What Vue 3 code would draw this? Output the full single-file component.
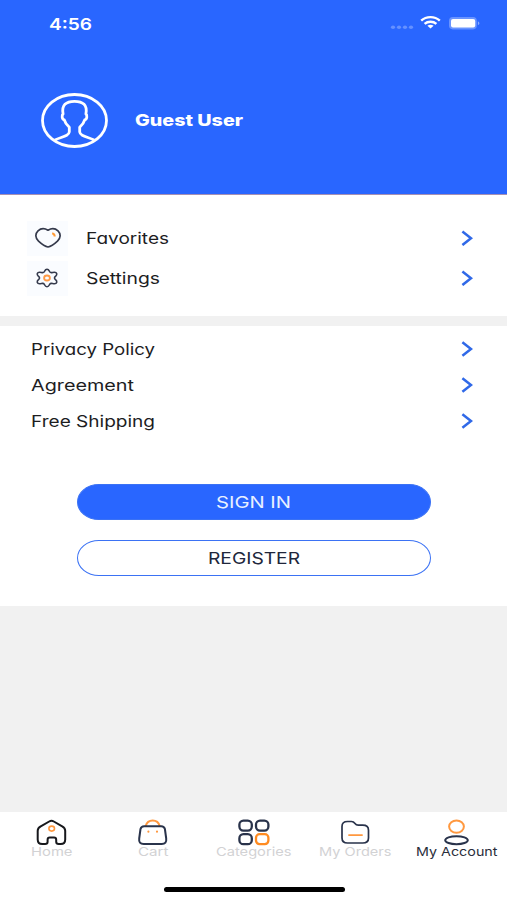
<script setup>
import { h } from 'vue'

// Label whose glyphs are widened to fill an exact width.
const WideText = (props) =>
  h('svg', { width: props.w, height: props.size * 1.25, overflow: 'visible', style: { display: 'block', flex: 'none' } }, [
    h('text', {
      x: 0, y: props.size, 'font-size': props.size, fill: 'currentColor',
      textLength: props.w, lengthAdjust: 'spacingAndGlyphs'
    }, props.text)
  ])
WideText.props = ['text', 'w', 'size']

const shortcuts = [
  { label: 'Favorites', w: 83, icon: 'heart' },
  { label: 'Settings', w: 74, icon: 'gear' }
]
const links = [
  { label: 'Privacy Policy', w: 124 },
  { label: 'Agreement', w: 103 },
  { label: 'Free Shipping', w: 124 }
]
const tabs = [
  { label: 'Home', w: 41.5, icon: 'home' },
  { label: 'Cart', w: 30.5, icon: 'cart' },
  { label: 'Categories', w: 75.5, icon: 'grid' },
  { label: 'My Orders', w: 72.5, icon: 'orders' },
  { label: 'My Account', w: 81.5, icon: 'account', active: true }
]
</script>

<template>
  <div class="page">
    <header class="hero">
      <div class="status">
        <WideText class="clock" text="4:56" :w="43" :size="16.2" />
        <svg class="indicators" width="92" height="16" viewBox="0 0 92 16">
          <g fill="#fff" opacity=".28">
            <ellipse cx="4" cy="12.2" rx="2.1" ry="1.7" /><ellipse cx="10" cy="12.2" rx="2.1" ry="1.7" />
            <ellipse cx="16" cy="12.2" rx="2.1" ry="1.7" /><ellipse cx="22" cy="12.2" rx="2.1" ry="1.7" />
          </g>
          <g fill="none" stroke="#fff" stroke-width="2.4">
            <path d="M32.2 5.7C37.3.9 45.7.9 50.8 5.7" />
            <path d="M35.6 8.9C38.9 6 44.1 6 47.4 8.9" />
          </g>
          <path d="M38.4 10.8Q41.5 8.8 44.6 10.8L41.5 13.6Z" fill="#fff" />
          <rect x="60" y="2" width="27.8" height="12.4" rx="3.8" fill="#fff" opacity=".3" />
          <rect x="62" y="4" width="24.2" height="8.4" rx="2" fill="#fff" />
          <path d="M88.9 6.2Q92 8.2 88.9 10.2Z" fill="#fff" opacity=".45" />
        </svg>
      </div>
      <div class="profile">
        <svg class="avatar" width="68" height="56" viewBox="0 0 68 56" fill="none" stroke="#fff" stroke-width="2.8" stroke-linejoin="round">
          <ellipse cx="33.5" cy="28.5" rx="32" ry="26" />
          <path d="M14 48C19.5 45 28 44.3 28.3 40V35.3C26 33.1 24 30.5 23.3 27.8C20.7 27.3 20.7 23 22.1 22C20.3 13 25 9.3 33.5 9.3S46.7 13 44.9 22C46.3 23 46.3 27.3 43.7 27.8C43 30.5 41 33.1 38.7 35.3V40C39 44.3 47.5 45 53 48" />
        </svg>
        <WideText text="Guest User" :w="108" :size="16" />
      </div>
    </header>

    <section class="shortcuts">
      <div v-for="s in shortcuts" :key="s.label" class="row">
        <span class="tile">
          <svg v-if="s.icon === 'heart'" width="28" height="22" viewBox="0 0 28 22" fill="none" stroke="#353a4c" stroke-width="1.7" stroke-linejoin="round">
            <path d="M14 3.2C10.5 1 6.7 1.3 4 3.8C.9 6.8 1.3 11.3 4.5 14.2C7.2 16.7 11.7 19.7 14 20C16.3 19.7 20.8 16.7 23.5 14.2C26.7 11.3 27.1 6.8 24 3.8C21.3 1.3 17.5 1 14 3.2Z" />
            <path d="M18.2 6.2Q20.7 7 20.7 9.4" stroke="#ff9a35" stroke-width="2" />
          </svg>
          <svg v-else class="gear" width="24" height="20" viewBox="0 0 24 20" fill="none" stroke="#353a4c" stroke-width="1.6" stroke-linejoin="round">
            <path d="M12 1.2C13.8 1.2 14.1 2.6 14.8 3.9C15.4 4.8 16.4 4.8 17.6 4.5C19.6 4 21.2 4.1 21.7 5.5C22.2 6.9 21.3 7.6 20.4 8.4C19.2 9.5 19.2 10.5 20.4 11.6C21.3 12.4 22.2 13.1 21.7 14.5C21.2 15.9 19.6 16 17.6 15.5C16.4 15.2 15.4 15.2 14.8 16.1C14.1 17.4 13.8 18.8 12 18.8C10.2 18.8 9.9 17.4 9.2 16.1C8.6 15.2 7.6 15.2 6.4 15.5C4.4 16 2.8 15.9 2.3 14.5C1.8 13.1 2.7 12.4 3.6 11.6C4.8 10.5 4.8 9.5 3.6 8.4C2.7 7.6 1.8 6.9 2.3 5.5C2.8 4.1 4.4 4 6.4 4.5C7.6 4.8 8.6 4.8 9.2 3.9C9.9 2.6 10.2 1.2 12 1.2Z" />
            <ellipse cx="12" cy="10" rx="2.9" ry="2.5" stroke="#ff9a45" stroke-width="1.8" />
          </svg>
        </span>
        <WideText :text="s.label" :w="s.w" :size="16" />
        <svg class="chevron" width="12" height="16" viewBox="0 0 12 16"><path d="M1.4 1.5L10 8.3L1.4 15.1" /></svg>
      </div>
    </section>

    <section class="more">
      <div v-for="l in links" :key="l.label" class="row link">
        <WideText :text="l.label" :w="l.w" :size="16" />
        <svg class="chevron" width="12" height="16" viewBox="0 0 12 16"><path d="M1.4 1.2L10 8L1.4 14.8" /></svg>
      </div>
      <div class="actions">
        <button class="btn primary"><WideText text="SIGN IN" :w="75" :size="16.5" /></button>
        <button class="btn outline"><WideText text="REGISTER" :w="92" :size="16.5" /></button>
      </div>
    </section>

    <nav class="tabbar">
      <div class="tabs">
        <div v-for="t in tabs" :key="t.label" class="tab" :class="{ active: t.active }">
          <svg width="32" height="28" viewBox="0 0 32 28" fill="none" stroke="#29334b" stroke-width="2" stroke-linecap="round" stroke-linejoin="round">
            <template v-if="t.icon === 'home'">
              <path stroke="#17181c" d="M4.7 7.4L13.2 2.5Q15.5 1.2 17.8 2.5L26.2 7.4Q29.2 9.2 29.2 11.7V20.5Q29.2 25.1 24.7 25.1H22.7Q20.2 25.1 20.2 22.8V20.7Q20.2 18.4 18 18.4H13.8Q11.6 18.4 11.6 20.7V22.8Q11.6 25.1 9.1 25.1H6.2Q1.7 25.1 1.7 20.5V11.7Q1.7 9.2 4.7 7.4Z" />
              <ellipse cx="15.7" cy="9.6" rx="2.8" ry="2.5" stroke="#ff983f" stroke-width="1.6" />
            </template>
            <template v-else-if="t.icon === 'cart'">
              <path d="M8.7 7C9.7 3.3 12.2 1.5 15.7 1.5S21.7 3.3 22.7 7" stroke="#ff983f" />
              <path d="M7.2 7.2H24.2Q27.2 7.2 27.9 10L29.2 19.5Q29.9 25 24.7 25H6.7Q1.5 25 2.2 19.5L3.5 10Q4.2 7.2 7.2 7.2Z" />
              <path d="M11.4 12.6V12.7M20 12.6V12.7" stroke="#ff983f" stroke-width="2.1" />
            </template>
            <template v-else-if="t.icon === 'grid'">
              <rect x="1.4" y="1.6" width="12.4" height="10" rx="4" stroke-width="2.3" />
              <rect x="18" y="1.6" width="12.4" height="10" rx="4" stroke-width="2.3" />
              <rect x="1.4" y="15.2" width="12.4" height="10" rx="4" stroke-width="2.3" />
              <rect x="18" y="15.2" width="12.4" height="10" rx="3.6" stroke="#ff8b21" stroke-width="2.3" />
            </template>
            <template v-else-if="t.icon === 'orders'">
              <path stroke-width="1.7" d="M8.5 2.5H12.5Q14.5 2.5 16 4.5Q17.2 6.2 19.2 6.2H23.7Q29.5 6.2 29.5 11.2V19Q29.5 24 23.7 24H8.5Q3 24 3 19V7.5Q3 2.5 8.5 2.5Z" />
              <path d="M10 16.1H23" stroke="#ff983f" stroke-width="1.9" />
            </template>
            <template v-else>
              <ellipse cx="16.5" cy="7.6" rx="7.4" ry="6.1" stroke="#ff983f" />
              <ellipse cx="16.5" cy="21.2" rx="11.3" ry="4" />
            </template>
          </svg>
          <WideText class="tab-label" :text="t.label" :w="t.w" :size="12" />
        </div>
      </div>
      <div class="home-indicator"></div>
    </nav>
  </div>
</template>

<style>
body { margin: 0; background: #f1f1f1; }
</style>

<style scoped>
.page {
  width: 507px;
  height: 900px;
  display: flex;
  flex-direction: column;
  background: #f1f1f1;
  color: #1d1d1f;
  font-family: Inter, "Open Sans", sans-serif;
  font-feature-settings: "cv11";
  overflow: hidden;
}
.hero {
  box-sizing: border-box;
  height: 195px;
  background: #2966ff;
  border-bottom: 1px solid #a58fb4;
  color: #fff;
}
.status {
  display: flex;
  justify-content: space-between;
  height: 34px;
  padding: 13px 26px 0 48.5px;
  box-sizing: border-box;
  font-weight: 600;
}
.clock { margin-top: 0.8px; }
.indicators { margin-top: 2px; }
.profile {
  display: flex;
  align-items: center;
  gap: 26px;
  padding: 58px 0 0 41px;
  font-weight: 800;
}
.shortcuts {
  box-sizing: border-box;
  height: 121px;
  padding-top: 23px;
  background: #fff;
}
.row {
  display: flex;
  align-items: center;
  height: 40px;
  padding: 0 34px 0 27px;
}
.tile {
  display: flex;
  align-items: center;
  justify-content: center;
  width: 41px;
  height: 35px;
  margin-right: 18px;
  background: #fafcff;
}
.gear { margin-left: -2px; }
.chevron { margin-left: auto; fill: none; stroke: #3069e8; stroke-width: 2.5; }
.more {
  box-sizing: border-box;
  height: 280px;
  margin-top: 10px;
  padding-top: 5px;
  background: #fff;
}
.link { height: 36px; padding-left: 31px; }
.actions {
  display: flex;
  flex-direction: column;
  gap: 20px;
  padding: 45px 76px 0 76.5px;
}
.btn {
  box-sizing: border-box;
  display: flex;
  align-items: center;
  justify-content: center;
  height: 36px;
  padding: 0 0 2px;
  border: 1px solid #3b72f4;
  border-radius: 22px / 18px;
  font: inherit;
}
.primary { background: #2966ff; color: #e8f0ff; }
.outline { background: #fff; color: #20263b; }
.tabbar {
  box-sizing: border-box;
  height: 88px;
  margin-top: auto;
  padding: 7px 0 0 1px;
  background: #fff;
}
.tabs { display: grid; grid-template-columns: repeat(5, 1fr); }
.tab {
  display: flex;
  flex-direction: column;
  align-items: center;
  color: #d2d2d4;
  font-feature-settings: normal;
}
.tab-label { margin-top: -3px; }
.active { color: #292d3a; }
.home-indicator {
  width: 181px;
  height: 5px;
  margin: 27.5px auto 0;
  border-radius: 3px;
  background: #000;
}
</style>
